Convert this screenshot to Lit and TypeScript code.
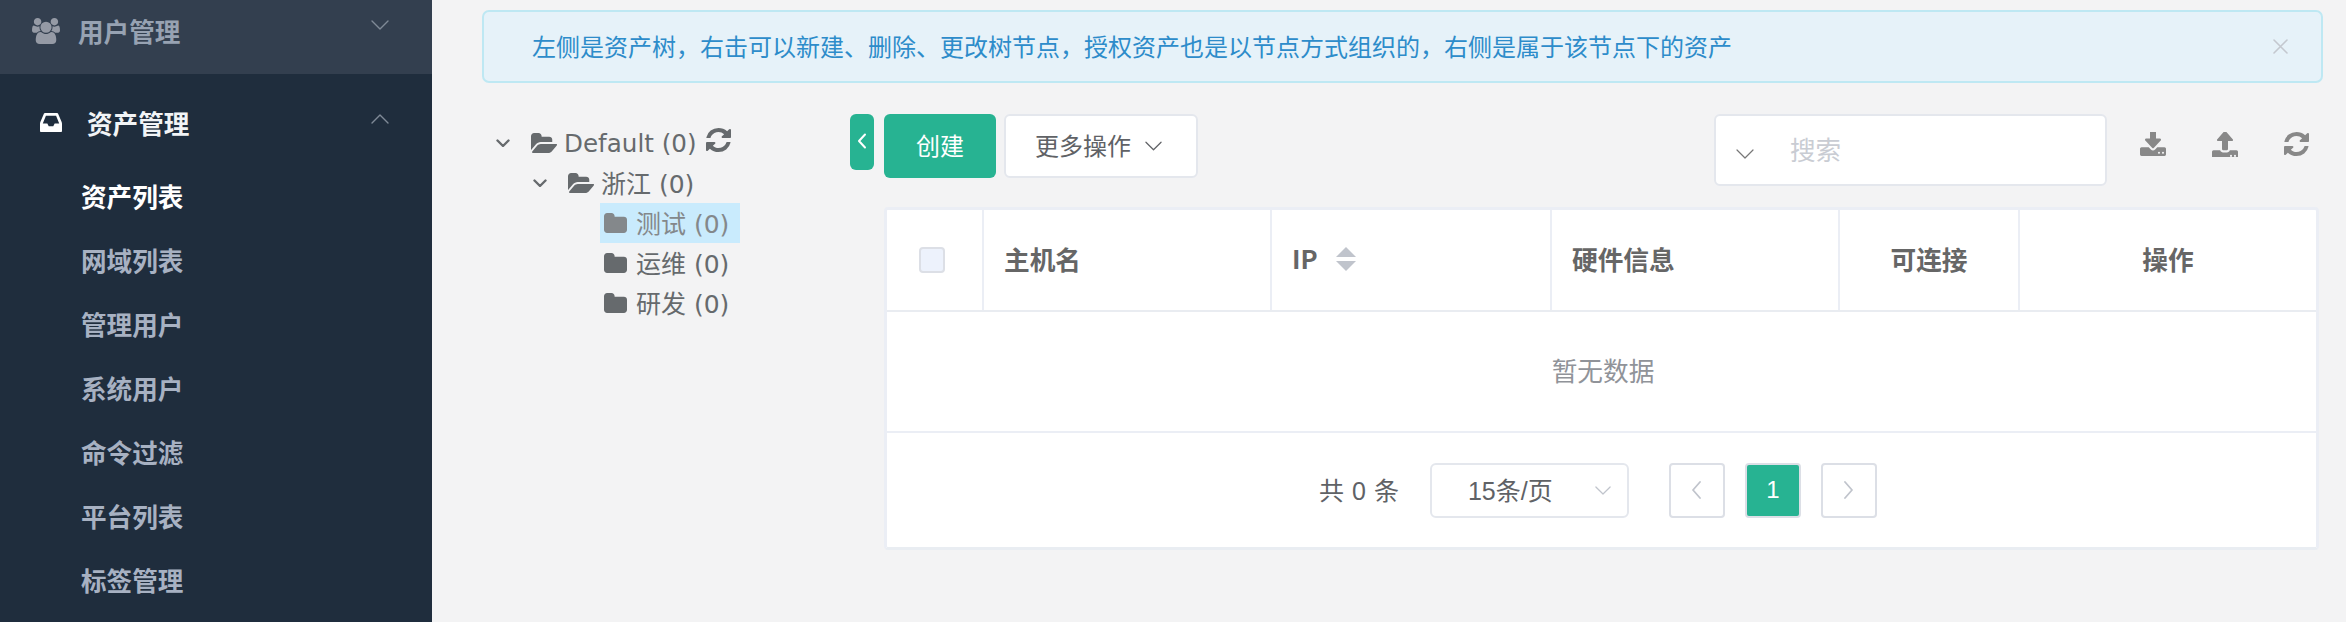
import { LitElement, html, css, svg } from "lit";
import { customElement } from "lit/decorators.js";

const P = {
  folder: "M1728 608v704q0 92-66 158t-158 66h-1216q-92 0-158-66t-66-158v-960q0-92 66-158t158-66h320q92 0 158 66t66 158v32h672q92 0 158 66t66 158z",
  open: "M1879 952q0 31-31 66l-336 396q-43 51-120.5 86.5t-143.5 35.5h-1088q-34 0-60.5-13t-26.5-43q0-31 31-66l336-396q43-51 120.5-86.5t143.5-35.5h1088q34 0 60.5 13t26.5 43zm-343-344v160h-832q-94 0-197 47.5t-164 119.5l-337 396-5 6q0-4-.5-12.5t-.5-12.5v-960q0-92 66-158t158-66h320q92 0 158 66t66 158v32h544q92 0 158 66t66 158z",
  refresh: "M1639 1056q0 5-1 7-64 268-268 434.5t-478 166.5q-146 0-282.5-55t-243.5-157l-129 129q-19 19-45 19t-45-19-19-45v-448q0-26 19-45t45-19h448q26 0 45 19t19 45-19 45l-137 137q71 66 161 102t187 36q134 0 250-65t186-179q11-17 53-117 8-23 30-23h192q13 0 22.5 9.5t9.5 22.5zm25-800v448q0 26-19 45t-45 19h-448q-26 0-45-19t-19-45 19-45l138-138q-148-137-349-137-134 0-250 65t-186 179q-11 17-53 117-8 23-30 23h-199q-13 0-22.5-9.5t-9.5-22.5v-7q65-268 270-434.5t480-166.5q146 0 284 55.5t245 156.5l130-129q19-19 45-19t45 19 19 45z",
  inbox: "M1023 960h316q-1-3-2.5-8t-2.5-8l-212-496h-708l-212 496q-1 3-2.5 8t-2.5 8h316l95 192h320zm513 30v482q0 26-19 45t-45 19h-1408q-26 0-45-19t-19-45v-482q0-62 25-123l238-552q10-25 36.5-42t52.5-17h832q26 0 52.5 17t36.5 42l238 552q25 61 25 123z",
  users: "M593 896q-162 5-265 128h-134q-82 0-138-40.5t-56-118.5q0-353 124-353 6 0 43.5 21t97.5 42.5 119 21.5q67 0 133-23-5 37-5 66 0 139 81 256zm1071 637q0 120-73 189.5t-194 69.5h-874q-121 0-194-69.5t-73-189.5q0-53 3.5-103.5t14-109 26.5-108.5 43-97.5 62-81 85.5-53.5 111.5-20q10 0 43 21.5t73 48 107 48 135 21.5 135-21.5 107-48 73-48 43-21.5q61 0 111.5 20t85.5 53.5 62 81 43 97.5 26.5 108.5 14 109 3.5 103.5zm-1024-1277q0 106-75 181t-181 75-181-75-75-181 75-181 181-75 181 75 75 181zm704 384q0 159-112.5 271.5t-271.5 112.5-271.5-112.5-112.5-271.5 112.5-271.5 271.5-112.5 271.5 112.5 112.5 271.5zm576 225q0 78-56 118.5t-138 40.5h-134q-103-123-265-128 81-117 81-256 0-29-5-66 66 23 133 23 59 0 119-21.5t97.5-42.5 43.5-21q124 0 124 353zm-128-609q0 106-75 181t-181 75-181-75-75-181 75-181 181-75 181 75 75 181z",
  download: "M1344 1344q0-26-19-45t-45-19-45 19-19 45 19 45 45 19 45-19 19-45zm256 0q0-26-19-45t-45-19-45 19-19 45 19 45 45 19 45-19 19-45zm128-224v320q0 40-28 68t-68 28h-1472q-40 0-68-28t-28-68v-320q0-40 28-68t68-28h465l135 136q58 56 136 56t136-56l136-136h464q40 0 68 28t28 68zm-325-569q17 41-14 70l-448 448q-18 19-45 19t-45-19l-448-448q-31-29-14-70 17-39 59-39h256v-448q0-26 19-45t45-19h256q26 0 45 19t19 45v448h256q42 0 59 39z",
  upload: "M1344 1472q0-26-19-45t-45-19-45 19-19 45 19 45 45 19 45-19 19-45zm256 0q0-26-19-45t-45-19-45 19-19 45 19 45 45 19 45-19 19-45zm128-224v320q0 40-28 68t-68 28h-1472q-40 0-68-28t-28-68v-320q0-40 28-68t68-28h427q21 56 70.5 92t110.5 36h256q61 0 110.5-36t70.5-92h427q40 0 68 28t28 68zm-325-648q-17 40-59 40h-256v448q0 26-19 45t-45 19h-256q-26 0-45-19t-19-45v-448h-256q-42 0-59-40-17-39 14-69l448-448q18-19 45-19t45 19l448 448q31 30 14 69z",
};

const fa = (d: string, vb: string, w: number, h: number) =>
  svg`<svg class="fa" viewBox=${vb} width=${w} height=${h} preserveAspectRatio="none"><path d=${d}></path></svg>`;

const line = (d: string, vb: string, w: number, h: number, cls: string) =>
  svg`<svg class=${cls} viewBox=${vb} width=${w} height=${h}><path d=${d} fill="none" stroke-linecap="round" stroke-linejoin="round"></path></svg>`;

const DOWN = "M1 1L9 9L17 1";
const UP = "M1 9L9 1L17 9";

@customElement("app-root")
export class AppRoot extends LitElement {
  static styles = css`
    :host {
      display: block;
      width: 2346px;
      height: 622px;
      overflow: hidden;
      background: #f3f3f4;
      font-family: "Noto Sans CJK SC", "Noto Sans", sans-serif;
      color: #606266;
    }
    * { box-sizing: border-box; }
    .fa { display: block; fill: currentColor; flex: none; }
    .page { display: flex; height: 622px; }

    .side { width: 432px; flex: none; background: #1f2d3d; font-size: 25.6px; font-weight: 700; color: #a7b1c2; }
    .side .t { line-height: 26px; white-space: nowrap; }
    .menu-user { height: 74px; background: #333f4f; display: flex; align-items: flex-start; padding: 18px 43px 0 32px; color: #9aa3b0; }
    .menu-user .fa { color: #959aa5; }
    .menu-user .t { margin: 0 0 0 18px; color: #97a2b2; }
    .chev-side { margin: 2px 0 0 auto; stroke: #7f8a97; stroke-width: 1.4; display: block; flex: none; }
    .menu-assets { height: 91px; display: flex; align-items: flex-start; padding: 36px 43px 0 40px; color: #eef1f4; }
    .menu-assets .fa { color: #fff; margin-top: 3px; }
    .menu-assets .t { margin-left: 25px; color: #f2f4f6; }
    .menu-assets .chev-side { margin-top: 4px; }
    .sub { height: 64px; display: flex; align-items: center; padding: 0 0 3px 81px; }
    .sub.on { color: #fff; }

    .main { flex: 1; min-width: 0; padding: 10px 23px 0 50px; }
    .alert { height: 73px; border: 2px solid #bee8f3; border-radius: 7px; background: #e6f2f9; color: #2d8cca; font-size: 24px; display: flex; align-items: center; padding: 0 33px 0 48px; }
    .alert .msg { flex: 1; white-space: nowrap; padding-bottom: 3px; }
    .close { stroke: #c4c8cf; stroke-width: 1.6; display: block; }

    .content { display: flex; margin-top: 31px; align-items: flex-start; }
    .tree { width: 368px; flex: none; padding-top: 9px; font-family: "DejaVu Sans", "Noto Sans CJK SC", sans-serif; font-size: 25px; color: #666a6d; }
    .node { height: 40px; display: flex; align-items: center; white-space: nowrap; }
    .node .lbl { padding-bottom: 2px; }
    .node .chev { stroke: #666a6d; stroke-width: 2.4; display: block; flex: none; }
    .n0 { padding-left: 14px; font-size: 24.6px; }
    .n0 .chev { margin-right: 21px; }
    .n0 .fa { margin-right: 8px; }
    .n0 .lbl { padding-bottom: 0; margin-left: -1px; }
    .n0 .re { margin: -6px 0 0 9px; }
    .n1 { padding-left: 51px; }
    .n1 .chev { margin-right: 21px; }
    .n1 .fa { margin-right: 7px; }
    .n2 { margin-left: 118px; padding: 0 12px 0 4px; width: 140px; }
    .n2 .fa { margin-right: 9px; }
    .n2.sel { background: #c9ebfd; color: #84888b; }

    .toggle { width: 24px; height: 56px; flex: none; border-radius: 6px; background: #27b392; margin-right: 10px; display: flex; align-items: center; justify-content: center; }
    .toggle svg { stroke: #fff; stroke-width: 2; display: block; margin-top: -3px; }
    .body { flex: 1; min-width: 0; }
    .bar { display: flex; align-items: flex-start; height: 72px; }
    .btn { height: 64px; border-radius: 6px; font-size: 24px; display: flex; align-items: center; padding-bottom: 4px; }
    .create { width: 112px; background: #27b392; color: #fff; margin-right: 8px; justify-content: center; }
    .more { width: 194px; background: #fff; border: 2px solid #e4e7ed; color: #606266; gap: 14px; padding-left: 29px; }
    .more svg { stroke: #606266; stroke-width: 1.3; display: block; margin-top: 3px; }
    .search { margin-left: auto; width: 393px; height: 72px; background: #fff; border: 2px solid #e4e7ed; border-radius: 6px; display: flex; align-items: center; padding-left: 20px; font-size: 25.6px; color: #c9ccd3; }
    .search svg { stroke: #777; stroke-width: 1.2; display: block; margin-top: 8px; margin-right: 36px; }
    .search span { padding-bottom: 3px; }
    .tools { display: flex; gap: 46px; padding: 18px 14px 0 33px; color: #888; }

    .table { margin: 21px 4px 0 0; border: 3px solid #ebeef5; border-bottom-color: #e9edf2; border-radius: 4px; background: #fff; }
    .head { display: flex; height: 102px; border-bottom: 2px solid #e9ecf1; font-size: 25.7px; font-weight: 700; color: #666; }
    .c { border-right: 2px solid #ebeef5; display: flex; align-items: center; flex: none; padding-bottom: 4px; }
    .c:last-child { border-right: 0; flex: 1; }
    .c0 { width: 97px; justify-content: center; padding-bottom: 0; }
    .c1 { width: 288px; padding-left: 20px; }
    .c2 { width: 280px; padding-left: 20px; gap: 18px; }
    .c3 { width: 288px; padding-left: 20px; }
    .c4 { width: 180px; justify-content: center; }
    .c5 { justify-content: center; }
    .check { width: 26px; height: 26px; margin-right: 5px; border: 2px solid #dcdfe6; border-radius: 4px; background: #edf2fc; }
    .ip { padding-bottom: 2px; }
    .sort { display: flex; flex-direction: column; gap: 4px; margin-top: 2px; }
    .sort i { display: block; width: 0; height: 0; border-left: 10px solid transparent; border-right: 10px solid transparent; }
    .sort i.u { border-bottom: 10px solid #c0c4cc; }
    .sort i.d { border-top: 10px solid #c0c4cc; }
    .empty { height: 121px; border-bottom: 2px solid #ebeef5; display: flex; align-items: center; justify-content: center; font-size: 25.7px; color: #909399; padding: 0 0 5px 3px; }
    .pager { height: 114px; display: flex; align-items: center; justify-content: center; padding: 0 7px 0 0; font-size: 25px; color: #606266; }
    .total { margin-right: 31px; white-space: nowrap; padding-bottom: 3px; word-spacing: 1px; font-family: "Liberation Sans", "Noto Sans CJK SC", sans-serif; }
    .size { width: 199px; height: 55px; border: 2px solid #e4e7ed; border-radius: 6px; display: flex; align-items: center; padding-left: 36px; margin-right: 40px; font-family: "Liberation Sans", "Noto Sans CJK SC", sans-serif; }
    .size span { padding-bottom: 3px; }
    .size svg { margin-left: auto; margin-right: 16px; stroke: #c0c4cc; stroke-width: 1.4; display: block; }
    .pg { width: 56px; height: 55px; border: 2px solid #dcdfe6; border-radius: 4px; display: flex; align-items: center; justify-content: center; }
    .pg svg { stroke: #c0c4cc; stroke-width: 1.8; display: block; }
    .pg.on { margin: 0 20px; background: #27b392; color: #fff; font-family: "Liberation Sans", sans-serif; font-size: 24px; }
  `;

  render() {
    const subs = ["资产列表", "网域列表", "管理用户", "系统用户", "命令过滤", "平台列表", "标签管理"];
    return html`<div class="page">
      <nav class="side">
        <div class="menu-user">
          ${fa(P.users, "0 0 1920 1792", 28, 26)}
          <span class="t">用户管理</span>
          ${line(DOWN, "0 0 18 10", 18, 10, "chev-side")}
        </div>
        <div class="menu-assets">
          ${fa(P.inbox, "0 256 1536 1280", 22, 19)}
          <span class="t">资产管理</span>
          ${line(UP, "0 0 18 10", 18, 10, "chev-side")}
        </div>
        ${subs.map((s, i) => html`<div class="sub ${i === 0 ? "on" : ""}"><span class="t">${s}</span></div>`)}
      </nav>
      <main class="main">
        <div class="alert">
          <span class="msg">左侧是资产树，右击可以新建、删除、更改树节点，授权资产也是以节点方式组织的，右侧是属于该节点下的资产</span>
          ${line("M1 1L14 14M14 1L1 14", "0 0 15 15", 15, 15, "close")}
        </div>
        <div class="content">
          <div class="tree">
            <div class="node n0">
              ${line("M1.5 1.5L7 7L12.5 1.5", "0 0 14 8.5", 14, 8.5, "chev")}
              ${fa(P.open, "0 128 1879 1408", 26, 20)}
              <span class="lbl">Default (0)</span>
              <span class="re">${fa(P.refresh, "128 128 1536 1536", 25, 24)}</span>
            </div>
            <div class="node n1">
              ${line("M1.5 1.5L7 7L12.5 1.5", "0 0 14 8.5", 14, 8.5, "chev")}
              ${fa(P.open, "0 128 1879 1408", 26, 20)}
              <span class="lbl">浙江 (0)</span>
            </div>
            <div class="node n2 sel">${fa(P.folder, "64 128 1664 1408", 23, 20)}<span class="lbl">测试 (0)</span></div>
            <div class="node n2">${fa(P.folder, "64 128 1664 1408", 23, 20)}<span class="lbl">运维 (0)</span></div>
            <div class="node n2">${fa(P.folder, "64 128 1664 1408", 23, 20)}<span class="lbl">研发 (0)</span></div>
          </div>
          <div class="toggle">${line("M8 1.5L2 8L8 14.5", "0 0 10 16", 10, 16, "")}</div>
          <div class="body">
            <div class="bar">
              <div class="btn create">创建</div>
              <div class="btn more">更多操作 ${line(DOWN, "0 0 18 10", 17, 10, "")}</div>
              <div class="search">${line(DOWN, "0 0 18 10", 18, 10, "")}<span>搜索</span></div>
              <div class="tools">
                ${fa(P.download, "64 128 1664 1408", 26, 24)}
                ${fa(P.upload, "64 128 1664 1408", 26, 25)}
                ${fa(P.refresh, "128 128 1536 1536", 25, 24)}
              </div>
            </div>
            <div class="table">
              <div class="head">
                <div class="c c0"><span class="check"></span></div>
                <div class="c c1">主机名</div>
                <div class="c c2"><span class="ip">IP</span><span class="sort"><i class="u"></i><i class="d"></i></span></div>
                <div class="c c3">硬件信息</div>
                <div class="c c4">可连接</div>
                <div class="c c5">操作</div>
              </div>
              <div class="empty">暂无数据</div>
              <div class="pager">
                <span class="total">共 0 条</span>
                <div class="size"><span>15条/页</span>${line(DOWN, "0 0 18 10", 16, 9, "")}</div>
                <div class="pg">${line("M9 1L2 9L9 17", "0 0 11 18", 11, 18, "")}</div>
                <div class="pg on">1</div>
                <div class="pg">${line("M2 1L9 9L2 17", "0 0 11 18", 11, 18, "")}</div>
              </div>
            </div>
          </div>
        </div>
      </main>
    </div>`;
  }
}
